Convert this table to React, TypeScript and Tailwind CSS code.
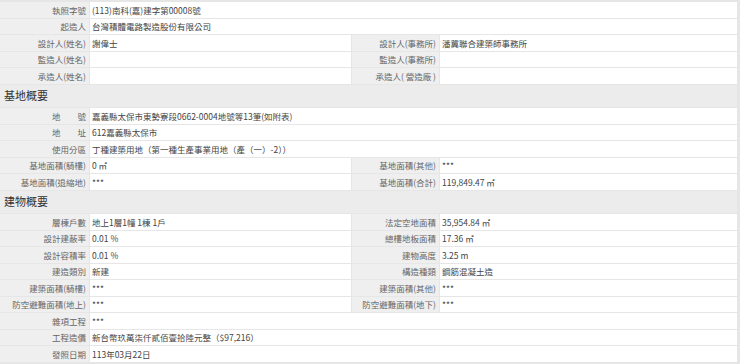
import React from "react";

type Row =
  | { kind: "full"; label: string; value: string }
  | { kind: "pair"; l1: string; v1: string; l2: string; v2: string }
  | { kind: "head"; title: string };

const rows: Row[] = [
  { kind: "full", label: "執照字號", value: "(113)南科(嘉)建字第00008號" },
  { kind: "full", label: "起造人", value: "台灣積體電路製造股份有限公司" },
  { kind: "pair", l1: "設計人(姓名)", v1: "謝偉士", l2: "設計人(事務所)", v2: "潘冀聯合建築師事務所" },
  { kind: "pair", l1: "監造人(姓名)", v1: "", l2: "監造人(事務所)", v2: "" },
  { kind: "pair", l1: "承造人(姓名)", v1: "", l2: "承造人( 營造廠 )", v2: "" },
  { kind: "head", title: "基地概要" },
  { kind: "full", label: "地　　號", value: "嘉義縣太保市東勢寮段0662-0004地號等13筆(如附表)" },
  { kind: "full", label: "地　　址", value: "612嘉義縣太保市" },
  { kind: "full", label: "使用分區", value: "丁種建築用地（第一種生產事業用地（產（一）-2））" },
  { kind: "pair", l1: "基地面積(騎樓)", v1: "0 ㎡", l2: "基地面積(其他)", v2: "***" },
  { kind: "pair", l1: "基地面積(退縮地)", v1: "***", l2: "基地面積(合計)", v2: "119,849.47 ㎡" },
  { kind: "head", title: "建物概要" },
  { kind: "pair", l1: "層棟戶數", v1: "地上1層1幢 1棟 1戶", l2: "法定空地面積", v2: "35,954.84 ㎡" },
  { kind: "pair", l1: "設計建蔽率", v1: "0.01 %", l2: "總樓地板面積", v2: "17.36 ㎡" },
  { kind: "pair", l1: "設計容積率", v1: "0.01 %", l2: "建物高度", v2: "3.25 m" },
  { kind: "pair", l1: "建造類別", v1: "新建", l2: "構造種類", v2: "鋼筋混凝土造" },
  { kind: "pair", l1: "建築面積(騎樓)", v1: "***", l2: "建築面積(其他)", v2: "***" },
  { kind: "pair", l1: "防空避難面積(地上)", v1: "***", l2: "防空避難面積(地下)", v2: "***" },
  { kind: "full", label: "雜項工程", value: "***" },
  { kind: "full", label: "工程造價", value: "新台幣玖萬柒仟貳佰壹拾陸元整（$97,216）" },
  { kind: "full", label: "發照日期", value: "113年03月22日" },
];

const Label = ({ children }: { children: React.ReactNode }) => (
  <div className="h-[15.5px] bg-[#efefef] pr-[3px] flex items-center justify-end whitespace-nowrap overflow-visible text-[#666]">
    {children}
  </div>
);

const Value = ({ children, wide }: { children: React.ReactNode; wide?: boolean }) => (
  <div
    className={`h-[15.5px] bg-white pl-[2px] flex items-center whitespace-nowrap text-[#444] ${
      wide ? "col-span-3" : ""
    }`}
  >
    {children}
  </div>
);

export default function App() {
  return (
    <div
      className="w-[740px] h-[364px] bg-[#e6e6e6] pt-[2px] overflow-hidden"
      style={{ fontFamily: '"Noto Sans CJK TC", "Noto Sans", sans-serif' }}
    >
      <div className="w-[737px] grid grid-cols-[89px_261px_87px_297px] gap-px text-[8.5px] leading-none">
        {rows.map((r, i) => {
          if (r.kind === "head") {
            return (
              <div
                key={i}
                className="col-span-4 h-[22.5px] bg-[#ececec] pl-[4px] flex items-center text-[11px] text-[#333]"
              >
                {r.title}
              </div>
            );
          }
          if (r.kind === "full") {
            return (
              <React.Fragment key={i}>
                <Label>{r.label}</Label>
                <Value wide>{r.value}</Value>
              </React.Fragment>
            );
          }
          return (
            <React.Fragment key={i}>
              <Label>{r.l1}</Label>
              <Value>{r.v1}</Value>
              <Label>{r.l2}</Label>
              <Value>{r.v2}</Value>
            </React.Fragment>
          );
        })}
      </div>
    </div>
  );
}
